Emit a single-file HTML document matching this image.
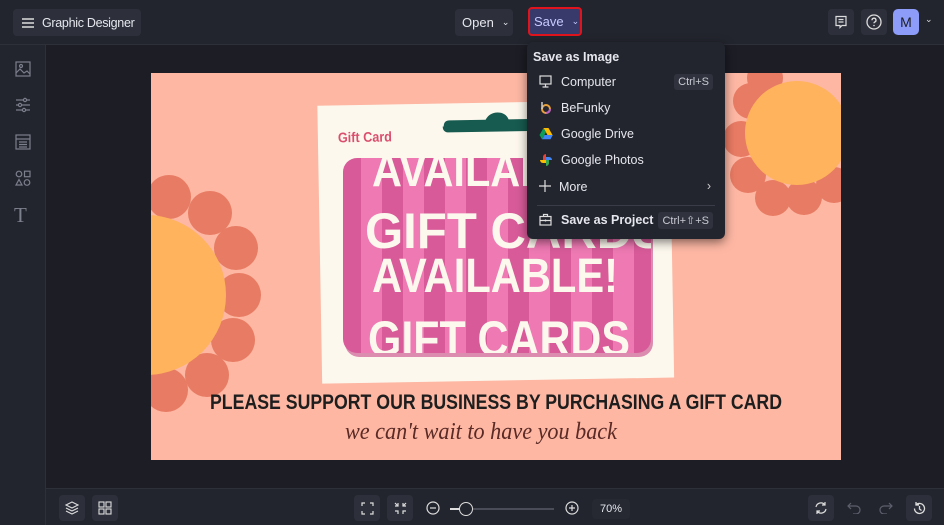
<!DOCTYPE html>
<html><head><meta charset="utf-8"><style>
*{margin:0;padding:0;box-sizing:border-box}
body{width:944px;height:525px;overflow:hidden;background:#1c1d25;font-family:"Liberation Sans",sans-serif;color:#e6e7ee;position:relative}
.top{position:absolute;left:0;top:0;width:944px;height:45px;background:#23252e;border-bottom:1px solid #2d2f39}
.btn{position:absolute;background:#2d303b;border-radius:4px;font-size:13px;color:#e6e7ee;display:flex;align-items:center;white-space:nowrap}
.side{position:absolute;left:0;top:45px;width:46px;height:480px;background:#23252e;border-right:1px solid #2d2f39}
.bot{position:absolute;left:46px;top:488px;width:898px;height:37px;background:#23252e;border-top:1px solid #2d2f39}
.canvas{position:absolute;left:151px;top:73px;width:690px;height:387px;background:#fdb7a3;overflow:hidden}
.menu{position:absolute;left:527px;top:42px;width:198px;height:197px;background:#23252e;border-radius:6px;box-shadow:0 3px 10px rgba(0,0,0,.5);font-size:12.5px}
.mi{position:absolute;left:34px;color:#e6e7ee}
.ic{position:absolute;left:12px}
.kbd{position:absolute;right:12px;background:#30323d;border-radius:3px;font-size:11px;padding:2px 4px;color:#c9cad3}
svg{display:block}
</style></head><body>
<div class="top">
 <div class="btn" style="left:13px;top:9px;width:128px;height:27px;padding-left:8px">
  <svg width="14" height="12" viewBox="0 0 14 12"><path d="M1 2h12M1 6h12M1 10h12" stroke="#ddd" stroke-width="1.4"/></svg>
  <span style="margin-left:7px;font-size:12.5px;letter-spacing:-0.3px">Graphic Designer</span></div>
 <div class="btn" style="left:455px;top:9px;width:58px;height:27px;padding-left:7px">Open <span style="margin-left:8px;font-size:9px">&#8964;</span></div>
 <div class="btn" style="left:528px;top:7px;width:54px;height:29px;background:#373a6b;border:2px solid #e0141c;padding-left:4px;color:#c8cbff">Save <span style="margin-left:8px;font-size:9px">&#8964;</span></div>
 <div class="btn" style="left:828px;top:9px;width:26px;height:26px;justify-content:center"><svg width="14" height="14" viewBox="0 0 14 14"><path d="M2 1.5h10v9H8l-2 2v-2H2z M4.5 4.5h5M4.5 7h5" fill="none" stroke="#ddd" stroke-width="1.2"/></svg></div>
 <div class="btn" style="left:861px;top:9px;width:26px;height:26px;justify-content:center"><svg width="16" height="16" viewBox="0 0 16 16"><circle cx="8" cy="8" r="7" fill="none" stroke="#ddd" stroke-width="1.3"/><path d="M6 6.2a2 2 0 1 1 2.6 1.9c-.5.2-.6.6-.6 1.2" fill="none" stroke="#ddd" stroke-width="1.3"/><circle cx="8" cy="11.5" r=".8" fill="#ddd"/></svg></div>
 <div class="btn" style="left:893px;top:9px;width:26px;height:26px;background:#8c9cf8;color:#1c1d25;justify-content:center;font-size:14px;border-radius:5px">M</div>
 <div style="position:absolute;left:925px;top:14px;font-size:9px;color:#ddd">&#8964;</div>
</div>
<div class="side">
 <svg style="position:absolute;left:15px;top:16px" width="16" height="16" viewBox="0 0 16 16" fill="none" stroke="#7c7f8c" stroke-width="1.2"><rect x="1" y="1" width="14" height="14"/><circle cx="6" cy="5" r="1.5"/><path d="M1 12l4-4 4 4 3-2 3 3"/></svg>
 <svg style="position:absolute;left:15px;top:52px" width="16" height="16" viewBox="0 0 16 16" fill="none" stroke="#7c7f8c" stroke-width="1.2"><path d="M1 3h14M1 8h14M1 13h14"/><circle cx="10" cy="3" r="1.6" fill="#23252e"/><circle cx="5" cy="8" r="1.6" fill="#23252e"/><circle cx="9" cy="13" r="1.6" fill="#23252e"/></svg>
 <svg style="position:absolute;left:15px;top:89px" width="16" height="16" viewBox="0 0 16 16" fill="none" stroke="#7c7f8c" stroke-width="1.2"><rect x="1" y="1" width="14" height="14"/><path d="M1 5h14M4 8h8M4 10.5h8M4 13h8"/></svg>
 <svg style="position:absolute;left:15px;top:125px" width="16" height="16" viewBox="0 0 16 16" fill="none" stroke="#7c7f8c" stroke-width="1.2"><circle cx="4" cy="4" r="2.8"/><rect x="9.5" y="1.2" width="5.5" height="5.5"/><path d="M4 9.5l3 5.5H1z"/><circle cx="12" cy="12.5" r="2.8"/></svg>
 <div style="position:absolute;left:14px;top:158px;font-family:'Liberation Serif',serif;font-size:21px;color:#7c7f8c">T</div>
</div>
<div class="canvas">
 <svg width="690" height="387" style="position:absolute;left:0;top:0">
  <g fill="#e87b63">
   <circle cx="18" cy="124" r="22"/><circle cx="59" cy="140" r="22"/><circle cx="85" cy="175" r="22"/><circle cx="88" cy="222" r="22"/><circle cx="82" cy="267" r="22"/><circle cx="56" cy="302" r="22"/><circle cx="15" cy="317" r="22"/>
   <circle cx="600" cy="28" r="18"/><circle cx="590" cy="66" r="18"/><circle cx="597" cy="102" r="18"/><circle cx="622" cy="125" r="18"/><circle cx="653" cy="124" r="18"/><circle cx="683" cy="112" r="18"/><circle cx="614" cy="5" r="18"/>
  </g>
  <circle cx="-5" cy="222" r="80" fill="#ffb35c"/>
  <circle cx="646" cy="60" r="52" fill="#ffb35c"/>
  <g transform="rotate(-1 495 240)">
   <rect x="170" y="27" width="352" height="278" fill="#fdf8ee"/>
   <path d="M296 50q0-6 6-6h36q4-7 12-7q8 0 11 7h20q6 0 6 6q0 6-6 6h-80q-6 0-6-6z" fill="#175a4f"/>
   <text x="190" y="64" font-family="Liberation Sans" font-weight="bold" font-size="14" fill="#d94f6d" textLength="54" lengthAdjust="spacingAndGlyphs">Gift Card</text>
  </g>
  <defs><pattern id="st" width="42" height="10" patternUnits="userSpaceOnUse"><rect width="21" height="10" fill="#ee79b3"/><rect x="21" width="21" height="10" fill="#d85a99"/></pattern>
  <clipPath id="cc"><rect x="192" y="85" width="308" height="195" rx="14"/></clipPath></defs>
  <rect x="194" y="89" width="308" height="195" rx="14" fill="#c44585" opacity=".6"/>
  <rect x="192" y="85" width="308" height="195" rx="14" fill="url(#st)"/>
  <g font-family="Liberation Sans" font-weight="bold" fill="#fdf8ee" clip-path="url(#cc)">
   <text x="221" y="113" font-size="46" textLength="245" lengthAdjust="spacingAndGlyphs">AVAILABLE!</text>
   <text x="214" y="175" font-size="50" textLength="300" lengthAdjust="spacingAndGlyphs">GIFT CARDS</text>
   <text x="221" y="219" font-size="48" textLength="246" lengthAdjust="spacingAndGlyphs">AVAILABLE!</text>
   <text x="217" y="283" font-size="50" textLength="262" lengthAdjust="spacingAndGlyphs">GIFT CARDS</text>
  </g>
  <text x="345" y="336" text-anchor="middle" font-family="Liberation Sans" font-weight="bold" font-size="21" fill="#1e1e1e" textLength="572" lengthAdjust="spacingAndGlyphs">PLEASE SUPPORT OUR BUSINESS BY PURCHASING A GIFT CARD</text>
  <text x="330" y="366" text-anchor="middle" font-family="Liberation Serif" font-style="italic" font-size="24" fill="#5a2a26" textLength="272" lengthAdjust="spacingAndGlyphs">we can't wait to have you back</text>
 </svg>
</div>
<div class="menu">
 <div style="position:absolute;left:6px;top:8px;font-weight:bold;font-size:12.5px">Save as Image</div>
 <svg class="ic" style="top:33px" width="13" height="13" viewBox="0 0 13 13" fill="none" stroke="#ddd" stroke-width="1.2"><rect x="1" y="1" width="11" height="8"/><path d="M6.5 9v2.5M3.5 12h6"/></svg>
 <div class="mi" style="top:33px">Computer</div><div class="kbd" style="top:32px">Ctrl+S</div>
 <svg class="ic" style="top:59px" width="13" height="13" viewBox="0 0 13 13"><circle cx="7" cy="8" r="4" fill="none" stroke="#e9a03b" stroke-width="2"/><circle cx="7" cy="8" r="4" fill="none" stroke="#b45cc9" stroke-width="2" stroke-dasharray="6 20"/><path d="M3 1v7" stroke="#ccc" stroke-width="1.5"/></svg>
 <div class="mi" style="top:59px">BeFunky</div>
 <svg class="ic" style="top:85px" width="14" height="13" viewBox="0 0 14 13"><path d="M4.5 1h5l4 7h-5z" fill="#fbbc04"/><path d="M4.5 1L0.5 8l2.5 4.3 4-7z" fill="#0f9d58"/><path d="M3 12.3h8.5l2.3-4.3H5.5z" fill="#4285f4"/></svg>
 <div class="mi" style="top:85px">Google Drive</div>
 <svg class="ic" style="top:111px" width="14" height="14" viewBox="0 0 14 14"><path d="M7 7V1a3 3 0 0 0-3 3v3z" fill="#ea4335"/><path d="M7 7h6a3 3 0 0 0-3-3H7z" fill="#4285f4"/><path d="M7 7v6a3 3 0 0 0 3-3V7z" fill="#34a853"/><path d="M7 7H1a3 3 0 0 0 3 3h3z" fill="#fbbc04"/></svg>
 <div class="mi" style="top:111px">Google Photos</div>
 <svg class="ic" style="top:138px" width="12" height="12" viewBox="0 0 12 12"><path d="M6 0v12M0 6h12" stroke="#ddd" stroke-width="1.2"/></svg>
 <div class="mi" style="top:138px;left:32px">More</div>
 <div style="position:absolute;right:14px;top:137px;color:#ccc">&#8250;</div>
 <div style="position:absolute;left:10px;right:10px;top:163px;height:1px;background:#3a3c47"></div>
 <svg class="ic" style="top:171px" width="13" height="13" viewBox="0 0 13 13" fill="none" stroke="#ddd" stroke-width="1.2"><rect x="1" y="3.5" width="11" height="8.5"/><path d="M4.5 3.5V1.5h4v2M1 7.5h11M6.5 6.5v2"/></svg>
 <div class="mi" style="top:171px;font-weight:bold">Save as Project</div><div class="kbd" style="top:170px">Ctrl+⇧+S</div>
</div>
<div class="bot">
 <div class="btn" style="left:13px;top:6px;width:26px;height:26px;justify-content:center"><svg width="14" height="14" viewBox="0 0 14 14" fill="none" stroke="#ddd" stroke-width="1.1"><path d="M7 1l6 3-6 3-6-3z M1 7l6 3 6-3 M1 10l6 3 6-3"/></svg></div>
 <div class="btn" style="left:46px;top:6px;width:26px;height:26px;justify-content:center"><svg width="14" height="14" viewBox="0 0 14 14" fill="none" stroke="#ddd" stroke-width="1.1"><rect x="1" y="1" width="5" height="5"/><rect x="8" y="1" width="5" height="5"/><rect x="1" y="8" width="5" height="5"/><rect x="8" y="8" width="5" height="5"/></svg></div>
 <div class="btn" style="left:308px;top:6px;width:26px;height:26px;justify-content:center"><svg width="13" height="13" viewBox="0 0 13 13" fill="none" stroke="#ddd" stroke-width="1.2"><path d="M1 4V1h3M9 1h3v3M12 9v3H9M4 12H1V9"/></svg></div>
 <div class="btn" style="left:341px;top:6px;width:26px;height:26px;justify-content:center"><svg width="13" height="13" viewBox="0 0 13 13" fill="none" stroke="#ddd" stroke-width="1.2"><path d="M4 1v3H1M9 1v3h3M12 9H9v3M1 9h3v3M4 4L1 1M9 4l3-3"/></svg></div>
 <svg style="position:absolute;left:380px;top:12px" width="14" height="14" viewBox="0 0 14 14" fill="none" stroke="#ddd" stroke-width="1.2"><circle cx="7" cy="7" r="6"/><path d="M4 7h6"/></svg>
 <div style="position:absolute;left:404px;top:19px;width:104px;height:2px;background:#4a4c58"></div>
 <div style="position:absolute;left:404px;top:19px;width:10px;height:2px;background:#ddd"></div>
 <div style="position:absolute;left:413px;top:13px;width:14px;height:14px;border-radius:50%;border:1.5px solid #ddd;background:#23252e"></div>
 <svg style="position:absolute;left:519px;top:12px" width="14" height="14" viewBox="0 0 14 14" fill="none" stroke="#ddd" stroke-width="1.2"><circle cx="7" cy="7" r="6"/><path d="M4 7h6M7 4v6"/></svg>
 <div class="btn" style="left:546px;top:10px;width:38px;height:20px;justify-content:center;font-size:11px;background:#262832">70%</div>
 <div class="btn" style="left:762px;top:6px;width:26px;height:26px;justify-content:center"><svg width="14" height="14" viewBox="0 0 14 14" fill="none" stroke="#ddd" stroke-width="1.2"><path d="M2 6a5 5 0 0 1 9-2M12 8a5 5 0 0 1-9 2M11 1v3H8M3 13v-3h3"/></svg></div>
 <svg style="position:absolute;left:801px;top:13px" width="14" height="12" viewBox="0 0 14 12" fill="none" stroke="#5d606c" stroke-width="1.2"><path d="M4 1L1 4l3 3M1 4h8a4 4 0 0 1 0 8H6"/></svg>
 <svg style="position:absolute;left:833px;top:13px" width="14" height="12" viewBox="0 0 14 12" fill="none" stroke="#5d606c" stroke-width="1.2"><path d="M10 1l3 3-3 3M13 4H5a4 4 0 0 0 0 8h3"/></svg>
 <div class="btn" style="left:860px;top:6px;width:26px;height:26px;justify-content:center"><svg width="15" height="15" viewBox="0 0 15 15" fill="none" stroke="#ddd" stroke-width="1.3"><path d="M2.5 7.5a5 5 0 1 0 1.5-3.6M4 1v3h3M7.5 5v3l2 1.5"/></svg></div>
</div>
</body></html>
